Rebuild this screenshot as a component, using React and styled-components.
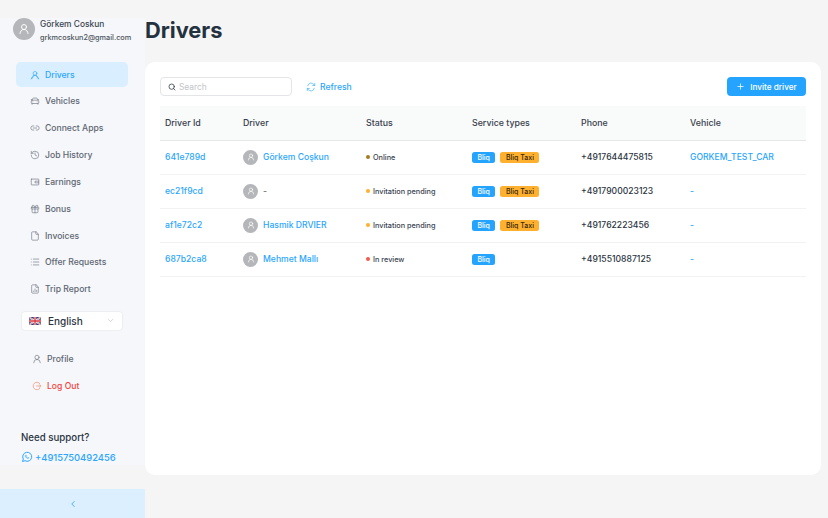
import React from "react";
import styled, { createGlobalStyle } from "styled-components";
import { CarFront, Link2, History, Gift, File, List, FileChartColumn, ChevronDown, ChevronLeft, UserRound, Search, Plus } from "lucide-react";

const Global = createGlobalStyle`
  html, body { margin: 0; padding: 0; background: #f5f5f5; }
  body { font-family: Inter, "Liberation Sans", sans-serif; color: #2b3441; }
`;

const Page = styled.div`
  width: 828px; height: 518px; display: grid; grid-template-columns: 145px minmax(0, 1fr); overflow: hidden;
`;
const Side = styled.aside`
  display: flex; flex-direction: column; height: 518px; padding-top: 18px; box-sizing: border-box;
`;
const Panel = styled.div`
  background: #f5f7fa; height: 447px; flex: none; display: flex; flex-direction: column;
`;
const Profile = styled.div`
  height: 44px; flex: none; box-sizing: border-box; padding: 0 0 0 13px; display: flex; gap: 5px; align-items: flex-start;
`;
const Avatar = styled.div`
  width: ${p => p.$size}px; height: ${p => p.$size}px; border-radius: 50%; background: #b4b6b9; color: #fff;
  display: flex; align-items: center; justify-content: center; flex: none;
`;
const Who = styled.div`
  display: flex; flex-direction: column; gap: 2px; padding-top: 1px;
`;
const Name = styled.div`font-size: 8.4px; line-height: 11px; color: #3a4350; font-weight: 500; white-space: nowrap;`;
const Mail = styled.div`font-size: 7.3px; line-height: 11px; color: #4d5560; font-weight: 500; white-space: nowrap;`;
const Nav = styled.nav`display: flex; flex-direction: column; gap: 1.85px; padding: 0 17px 0 16px;`;
const Item = styled.div`
  height: 25px; border-radius: 5px; display: flex; align-items: center; gap: 5px; padding-left: 14px;
  font-size: 8.6px; font-weight: 500; white-space: nowrap;
  color: ${p => p.$active ? "#2ba6ff" : p.$danger ? "#f2453d" : "#5e6672"};
  background: ${p => p.$active ? "#d9eeff" : "transparent"};
  svg { flex: none; color: ${p => p.$active ? "#2ba6ff" : p.$danger ? "#f2805f" : "#6b727d"}; }
`;
const Lang = styled.div`
  margin: 9px 22px 0 21px; height: 20px; background: #fff; border-radius: 4px; border: 1px solid #eceef0;
  box-sizing: border-box; display: flex; align-items: center; padding: 0 7px; gap: 7px;
  font-size: 10px; font-weight: 500; color: #2b3441;
  svg:last-child { margin-left: auto; color: #c6c9cd; }
`;
const Bottom = styled(Nav)`margin-top: 16px; padding-left: 18px;`;
const Support = styled.div`padding: 32px 0 0 21px; display: flex; flex-direction: column; gap: 7px;`;
const SupportTitle = styled.div`font-size: 9.7px; line-height: 13px; font-weight: 500; color: #2b3441;`;
const SupportPhone = styled.div`
  display: flex; align-items: center; gap: 2px; font-size: 9.4px; line-height: 13px; color: #2ba6ff; font-weight: 500;
`;
const Collapse = styled.div`
  height: 29px; margin-top: auto; background: #dceffe; color: #2ba6ff; display: flex; align-items: center; justify-content: center; flex: none;
`;
const Main = styled.main`display: flex; flex-direction: column; padding-right: 7px; min-width: 0;`;
const Title = styled.h1`
  margin: 0; height: 62px; flex: none; box-sizing: border-box; padding-top: 15px; font-size: 21.8px; line-height: 30px; font-weight: 700; color: #24313f;
`;
const Card = styled.section`
  height: 413px; background: #fff; border-radius: 10px; padding: 15px 15px 0 15px; box-sizing: border-box;
`;
const Toolbar = styled.div`display: flex; align-items: center; height: 19px; margin-bottom: 10px;`;
const SearchBox = styled.div`
  width: 132px; height: 19px; border: 1px solid #e3e5e8; border-radius: 4px; box-sizing: border-box;
  display: flex; align-items: center; gap: 3px; padding-left: 7px; font-size: 8.4px; color: #c2c5c9;
  svg { color: #3d4450; }
`;
const Refresh = styled.div`
  margin-left: 14px; display: flex; align-items: center; gap: 4px; color: #2ba6ff; font-size: 8.6px; font-weight: 500;
`;
const Invite = styled.div`
  margin-left: auto; width: 79px; height: 19px; background: #25a4ff; color: #fff; border-radius: 4px; font-size: 8.2px; font-weight: 500;
  display: flex; align-items: center; justify-content: center; gap: 5px;
`;
const Table = styled.table`
  width: 646px; border-collapse: collapse; table-layout: fixed;
`;
const Th = styled.th`
  box-sizing: border-box; height: 34px; padding: 0 0 0 5px; background: #f9fafa; border-bottom: 1px solid #e4e6e8; text-align: left;
  font-size: 8.8px; font-weight: 500; color: #38414d;
  width: ${p => p.$w}px;
`;
const Td = styled.td`
  box-sizing: border-box; height: 34px; padding: 0 0 0 5px; border-bottom: 1px solid #f1f2f3; font-size: 8.6px; color: #2b3441; font-weight: 500; white-space: nowrap;
`;
const A = styled.span`color: #2ba6ff; font-weight: 500;`;
const DriverCell = styled.div`display: flex; align-items: center; gap: 5px;`;
const Muted = styled.span`color: #6b727d;`;
const StatusCell = styled.div`display: flex; align-items: center; gap: 3px; font-size: 7.3px; color: #3a4350;`;
const Dot = styled.span`width: 4px; height: 4px; border-radius: 50%; background: ${p => p.$c}; flex: none; margin-top: -1px;`;
const Tags = styled.div`display: flex; gap: 5px;`;
const Tag = styled.span`
  height: 11px; line-height: 11px; border-radius: 2.5px; padding: 0 5.5px; font-size: 7px; font-weight: 500;
  background: ${p => p.$orange ? "#ffb02e" : "#25a4ff"}; color: ${p => p.$orange ? "#33270f" : "#fff"};
`;

const Ico = ({ size = 11, w = 1.5, children }) => (
  <svg width={size} height={size} viewBox="0 0 24 24" fill="none" stroke="currentColor" strokeWidth={w} strokeLinecap="round" strokeLinejoin="round">{children}</svg>
);
const DriverIcon = (p) => (
  <Ico {...p}><circle cx="12" cy="8" r="4.5" /><path d="M4 21c0-4.500 3-8 8-8s8 3.500 8 8M3 21c3-1.500 5-4 6.500-8.500M21 21c-3-1.500-5-4-6.500-8.500" /></Ico>
);
const WalletIcon = (p) => (
  <Ico {...p}><path d="M4 5h16a1 1 0 0 1 1 1v12a1 1 0 0 1-1 1H4a1 1 0 0 1-1-1V6a1 1 0 0 1 1-1z" /><path d="M21 10h-9v4h9" /></Ico>
);
const LogoutIcon = (p) => (
  <Ico {...p}><path d="M19 6.500A9 9 0 1 0 19 17.500" /><path d="M11 12h10M18 9l3 3-3 3" /></Ico>
);
const RefreshIcon = (p) => (
  <Ico {...p}><path d="M4 9a8.500 8.500 0 0 1 15-3l1.500 2M20 15a8.500 8.500 0 0 1-15 3l-1.500-2" /><path d="M21 3.500v5h-5M3 20.500v-5h5" /></Ico>
);
const Whats = () => (
  <svg width="12" height="12" viewBox="0 0 24 24" fill="none" stroke="currentColor" strokeWidth="2">
    <path d="M3 21l1.600-5A9 9 0 1 1 8 19.400L3 21z" />
    <path d="M9 8.500c-.8.800-.6 2.400.8 4.200 1.500 1.800 3.300 2.700 4.500 2.300.8-.3 1.200-1 1.200-1.600l-2-1-.9.900c-1-.4-1.800-1.200-2.300-2.300l.8-.9-.9-2.100c-.2 0-.7 0-1.200.5z" strokeWidth="1.2" />
  </svg>
);
const Flag = () => (
  <svg width="12" height="8" viewBox="0 0 12 8">
    <rect width="12" height="8" fill="#2d3f7c" />
    <path d="M0 0l12 8M12 0L0 8" stroke="#fff" strokeWidth="1.6" />
    <path d="M0 0l12 8M12 0L0 8" stroke="#d8343f" strokeWidth=".6" />
    <path d="M6 0v8M0 4h12" stroke="#fff" strokeWidth="2.4" />
    <path d="M6 0v8M0 4h12" stroke="#d8343f" strokeWidth="1.3" />
  </svg>
);

const nav = [
  ["Drivers", p => <DriverIcon {...p} />], ["Vehicles", p => <CarFront {...p} />], ["Connect Apps", p => <Link2 {...p} />],
  ["Job History", p => <History {...p} />], ["Earnings", p => <WalletIcon {...p} />], ["Bonus", p => <Gift {...p} />],
  ["Invoices", p => <File {...p} />], ["Offer Requests", p => <List {...p} />], ["Trip Report", p => <FileChartColumn {...p} />],
];
const rows = [
  { id: "641e789d", name: "Görkem Coşkun", status: "Online", c: "#a67c1f", taxi: true, phone: "+4917644475815", car: "GORKEM_TEST_CAR" },
  { id: "ec21f9cd", name: "-", muted: true, status: "Invitation pending", c: "#ffb02e", taxi: true, phone: "+4917900023123", car: "-" },
  { id: "af1e72c2", name: "Hasmik DRVIER", status: "Invitation pending", c: "#ffb02e", taxi: true, phone: "+491762223456", car: "-" },
  { id: "687b2ca8", name: "Mehmet Mallı", status: "In review", c: "#ee5b50", taxi: false, phone: "+4915510887125", car: "-" },
];

export default function App() {
  return (
    <Page>
      <Global />
      <Side>
        <Panel>
          <Profile>
            <Avatar $size={22}><UserRound size={12} /></Avatar>
            <Who><Name>Görkem Coskun</Name><Mail>grkmcoskun2@gmail.com</Mail></Who>
          </Profile>
          <Nav>
            {nav.map(([label, render], i) => (
              <Item key={label} $active={i === 0}>{render({ size: 10, strokeWidth: 1.5 })}{label}</Item>
            ))}
          </Nav>
          <Lang><Flag />English<ChevronDown size={9} /></Lang>
          <Bottom>
            <Item><UserRound size={10} strokeWidth={1.5} />Profile</Item>
            <Item $danger><LogoutIcon size={10} />Log Out</Item>
          </Bottom>
          <Support>
            <SupportTitle>Need support?</SupportTitle>
            <SupportPhone><Whats />+4915750492456</SupportPhone>
          </Support>
        </Panel>
        <Collapse><ChevronLeft size={10} /></Collapse>
      </Side>
      <Main>
        <Title>Drivers</Title>
        <Card>
          <Toolbar>
            <SearchBox><Search size={8} strokeWidth={2.5} />Search</SearchBox>
            <Refresh><RefreshIcon size={10} />Refresh</Refresh>
            <Invite><Plus size={9} />Invite driver</Invite>
          </Toolbar>
          <Table>
            <thead>
              <tr>
                <Th $w={78}>Driver Id</Th><Th $w={123}>Driver</Th><Th $w={106}>Status</Th>
                <Th $w={109}>Service types</Th><Th $w={109}>Phone</Th><Th $w={121}>Vehicle</Th>
              </tr>
            </thead>
            <tbody>
              {rows.map(r => (
                <tr key={r.id}>
                  <Td><A>{r.id}</A></Td>
                  <Td>
                    <DriverCell>
                      <Avatar $size={15}><UserRound size={8} /></Avatar>
                      {r.muted ? <Muted>{r.name}</Muted> : <A>{r.name}</A>}
                    </DriverCell>
                  </Td>
                  <Td><StatusCell><Dot $c={r.c} />{r.status}</StatusCell></Td>
                  <Td><Tags><Tag>Bliq</Tag>{r.taxi && <Tag $orange>Bliq Taxi</Tag>}</Tags></Td>
                  <Td>{r.phone}</Td>
                  <Td><A>{r.car}</A></Td>
                </tr>
              ))}
            </tbody>
          </Table>
        </Card>
      </Main>
    </Page>
  );
}
